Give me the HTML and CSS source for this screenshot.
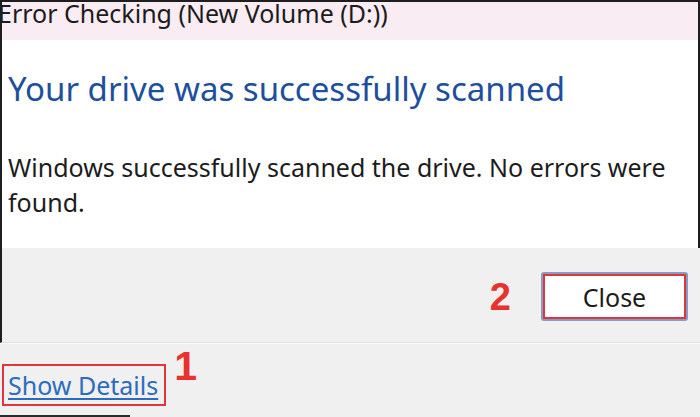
FILE: index.html
```html
<!DOCTYPE html>
<html lang="en">
<head>
<meta charset="utf-8">
<title>Error Checking</title>
<link rel="stylesheet" href="styles.css">
</head>
<body>
<div class="window">
  <div class="upper">
    <div class="titlebar"><span class="title">Error Checking (New Volume (D:))</span></div>
    <div class="content">
      <h1 class="heading">Your drive was successfully scanned</h1>
      <p class="message">Windows successfully scanned the drive. No errors were found.</p>
    </div>
  </div>
  <div class="footer">
    <span class="mark mark-2">2</span>
    <button class="close-btn"><span class="close-inner">Close</span></button>
  </div>
  <div class="details">
    <a class="details-link" href="#">Show Details</a>
    <span class="mark mark-1">1</span>
  </div>
  <div class="bottom-edge"></div>
</div>
</body>
</html>
```
FILE: styles.css
```css
html, body {
  margin: 0;
  padding: 0;
}
body {
  width: 700px;
  height: 417px;
  overflow: hidden;
  background: #f0f0f0;
  font-family: "Noto Sans", "Open Sans", sans-serif;
}
.window {
  display: flex;
  flex-direction: column;
  height: 417px;
  border-top: 2px solid #1e1e1e;
  box-sizing: border-box;
}
.upper {
  border-left: 2px solid #1e1e1e;
  border-right: 2px solid #1e1e1e;
  background: #fff;
}
.titlebar {
  height: 38px;
  background: #f9edf3;
  overflow: hidden;
  white-space: nowrap;
}
.title {
  display: block;
  margin-left: -4px;
  margin-top: -4px;
  font-size: 25px;
  line-height: 30px;
  color: #1c1c1c;
}
.content {
  height: 208px;
  box-sizing: border-box;
  padding: 28px 8px 0 6px;
}
.heading {
  margin: 0;
  font-weight: normal;
  font-size: 33px;
  line-height: 42px;
  color: #1d4f9c;
}
.message {
  margin: 40px 0 0 0;
  font-size: 25px;
  line-height: 35px;
  color: #1c1c1c;
  width: 680px;
}
.footer {
  height: 95px;
  border-left: 2px solid #1e1e1e;
  display: flex;
  align-items: flex-start;
  justify-content: flex-end;
  padding: 24px 12px 0 0;
  box-sizing: border-box;
  border-bottom: 1px solid #e2e2e2;
  gap: 30px;
}
.mark {
  color: #e8322f;
  font-family: "Liberation Sans", Arial, sans-serif;
  font-weight: bold;
  line-height: 1;
}
.mark-2 {
  font-size: 38px;
  margin-top: 6px;
}
.close-btn {
  width: 147px;
  height: 49px;
  padding: 0;
  background: #fff;
  border: 2px solid #7f9fc7;
  border-radius: 3px;
  font-family: inherit;
  cursor: pointer;
}
.close-inner {
  display: flex;
  align-items: center;
  justify-content: center;
  height: 100%;
  border: 2px solid #e0353c;
  box-sizing: border-box;
  font-size: 25px;
  color: #1c1c1c;
}
.details {
  flex: 1;
  border-top: 1px solid #fafafa;
  display: flex;
  align-items: flex-start;
  padding: 0 0 0 2px;
  gap: 8px;
}
.details-link {
  display: block;
  margin-top: 20px;
  border: 2px solid #e0353c;
  padding: 3px 6px 3px 4px;
  font-size: 25px;
  line-height: 32px;
  color: #2b6cc0;
  text-decoration: underline;
  text-underline-offset: 3px;
}
.mark-1 {
  font-size: 41px;
  margin-top: 2px;
}
.bottom-edge {
  width: 130px;
  height: 2px;
  background: #2a2a2a;
}
```
